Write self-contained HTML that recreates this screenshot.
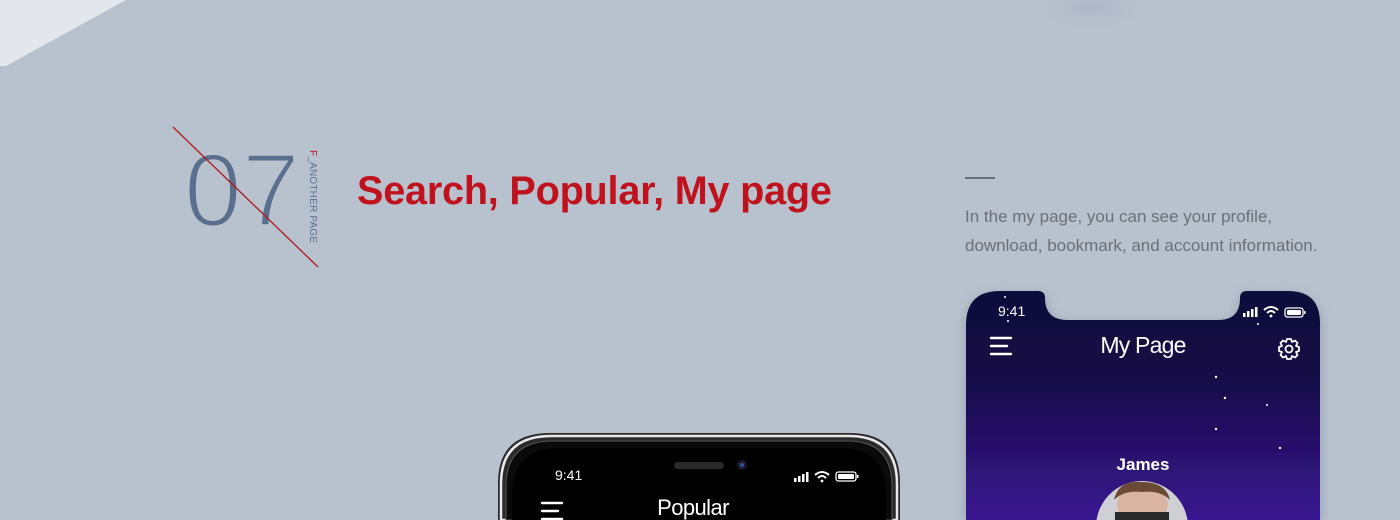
<!DOCTYPE html>
<html><head><meta charset="utf-8"><style>
*{margin:0;padding:0;box-sizing:border-box}
html,body{width:1400px;height:520px;overflow:hidden}
body{background:#b8c2ce;position:relative;font-family:"Liberation Sans",sans-serif}
.abs{position:absolute}
svg{display:block}
</style></head><body>
<svg class="abs" style="left:0;top:0" width="1400" height="520">
<defs>
<radialGradient id="blob" cx="50%" cy="50%" r="50%"><stop offset="0" stop-color="#adb6c6"/><stop offset="1" stop-color="#b8c2ce" stop-opacity="0"/></radialGradient>
<linearGradient id="scr" x1="0" y1="0" x2="0" y2="1"><stop offset="0" stop-color="#0f0a3a"/><stop offset="0.35" stop-color="#140a45"/><stop offset="1" stop-color="#3a1790"/></linearGradient>
<filter id="sh" x="-20%" y="-20%" width="140%" height="140%"><feDropShadow dx="0" dy="4" stdDeviation="6" flood-color="#6a7488" flood-opacity="0.5"/></filter>
</defs>
<polygon points="0,0 126,0 6,66 0,66" fill="#e3e6ea"/>
<ellipse cx="1090" cy="8" rx="70" ry="28" fill="url(#blob)"/>
<line x1="965" y1="178" x2="995" y2="178" stroke="#6d6f74" stroke-width="2"/>
<path filter="url(#sh)" d="M1000 291 H1038 Q1045 291 1045 298 Q1045 320 1068 320 H1218 Q1240 320 1240 298 Q1240 291 1247 291 H1288 Q1320 291 1320 323 V520 H966 V325 Q966 291 1000 291 Z" fill="url(#scr)"/>
<g fill="#fff"><circle cx="1216" cy="377" r="1.2"/><circle cx="1225" cy="398" r="1.2"/><circle cx="1267" cy="405" r="1"/><circle cx="1216" cy="429" r="1.2"/><circle cx="1280" cy="448" r="1.2"/><circle cx="1008" cy="321" r="1"/><circle cx="1258" cy="324" r="1"/><circle cx="1005" cy="297" r="1"/></g>
<g stroke="#fff" stroke-width="2.4" stroke-linecap="round"><line x1="991" y1="338" x2="1011" y2="338"/><line x1="991" y1="346" x2="1007" y2="346"/><line x1="991" y1="354" x2="1011" y2="354"/></g>
<g transform="translate(1289,349)" fill="none" stroke="#fff" stroke-width="1.8"><circle r="3.5"/><path d="M-2 -10 L2 -10 L3 -7 L6 -8.5 L8.5 -6 L7 -3 L10 -2 L10 2 L7 3 L8.5 6 L6 8.5 L3 7 L2 10 L-2 10 L-3 7 L-6 8.5 L-8.5 6 L-7 3 L-10 2 L-10 -2 L-7 -3 L-8.5 -6 L-6 -8.5 L-3 -7 Z" stroke-linejoin="round"/></g>
<g fill="#fff"><rect x="1243" y="313" width="2.5" height="4"/><rect x="1247" y="311" width="2.5" height="6"/><rect x="1251" y="309" width="2.5" height="8"/><rect x="1255" y="307" width="2.5" height="10"/></g>
<path d="M1264 310 Q1271 304 1278 310" stroke="#fff" stroke-width="2" fill="none"/><path d="M1267 313 Q1271 309 1275 313" stroke="#fff" stroke-width="2" fill="none"/><circle cx="1271" cy="316" r="1.4" fill="#fff"/>
<rect x="1285" y="308" width="18" height="9" rx="2.5" fill="none" stroke="#fff" stroke-width="1.3"/><rect x="1287" y="310" width="14" height="5" rx="1" fill="#fff"/><rect x="1304" y="311" width="1.5" height="3" fill="#fff"/>
<circle cx="1142" cy="527" r="46" fill="#cfd0d6"/>
<path d="M1117 505 Q1120 483 1142 484 Q1164 483 1168 505 L1164 520 H1120 Z" fill="#d9b4a0"/>
<path d="M1114 500 Q1118 480 1142 482 Q1166 482 1170 500 Q1160 490 1142 492 Q1124 490 1114 500Z" fill="#6b4a35"/>
<rect x="1115" y="512" width="54" height="8" fill="#2a2a2a"/>
<path d="M550 433 H850 Q900 433 900 483 V520 H498 V483 Q498 433 550 433Z" fill="#2a2a2a"/>
<path d="M551 436 H849 Q897 436 897 484 V520 H501 V484 Q501 436 551 436Z" fill="none" stroke="#e8e8e8" stroke-width="2.5"/>
<path d="M553 441 H847 Q892 441 892 486 V520 H506 V486 Q506 441 553 441Z" fill="#0a0a0a" stroke="#555" stroke-width="1"/>
<path d="M560 448 H840 Q886 448 886 494 V520 H512 V494 Q512 448 560 448Z" fill="#000"/>
<rect x="674" y="462" width="50" height="7" rx="3.5" fill="#2a2a2a"/>
<circle cx="742" cy="465" r="5" fill="#1a1a2a"/><circle cx="742" cy="465" r="2" fill="#3050a0"/>
<g stroke="#fff" stroke-width="2.4" stroke-linecap="round"><line x1="542" y1="503" x2="562" y2="503"/><line x1="542" y1="511" x2="558" y2="511"/><line x1="542" y1="519" x2="562" y2="519"/></g>
<g fill="#fff"><rect x="794" y="478" width="2.5" height="4"/><rect x="798" y="476" width="2.5" height="6"/><rect x="802" y="474" width="2.5" height="8"/><rect x="806" y="472" width="2.5" height="10"/></g>
<path d="M815 475 Q822 469 829 475" stroke="#fff" stroke-width="2" fill="none"/><path d="M818 478 Q822 474 826 478" stroke="#fff" stroke-width="2" fill="none"/><circle cx="822" cy="481" r="1.4" fill="#fff"/>
<rect x="836" y="472" width="20" height="9" rx="2.5" fill="none" stroke="#fff" stroke-width="1.3"/><rect x="838" y="474" width="16" height="5" rx="1" fill="#fff"/><rect x="857" y="475" width="1.5" height="3" fill="#fff"/>
</svg>
<div class="abs" style="left:184px;top:136px;font-size:104px;line-height:110px;color:#5a6f8e;-webkit-text-stroke:3px #b8c2ce">07</div>
<svg class="abs" style="left:0;top:0" width="400" height="300"><line x1="173" y1="127" x2="318" y2="267" stroke="#b01a22" stroke-width="1.3"/></svg>
<div class="abs" style="left:318px;top:150px;transform-origin:0 0;transform:rotate(90deg);font-size:10px;color:#5a6f8e;white-space:nowrap;letter-spacing:0.2px"><span style="color:#b01a22">F</span>_ANOTHER PAGE</div>
<div class="abs" style="left:357px;top:169px;font-size:39.6px;font-weight:bold;color:#c0121c;white-space:nowrap;letter-spacing:-0.2px">Search, Popular, My page</div>
<div class="abs" style="left:965px;top:202px;font-size:17px;line-height:29px;color:#6d6f74;letter-spacing:0px;white-space:nowrap">In the my page, you can see your profile,<br>download, bookmark, and account information.</div>
<div class="abs" style="left:998px;top:303px;font-size:14px;color:#fff">9:41</div>
<div class="abs" style="left:966px;width:354px;top:332px;text-align:center;font-size:23px;color:#fff;letter-spacing:-0.8px">My Page</div>
<div class="abs" style="left:966px;width:354px;top:455px;text-align:center;font-size:17px;font-weight:bold;color:#fff">James</div>
<div class="abs" style="left:555px;top:467px;font-size:14px;color:#fff">9:41</div>
<div class="abs" style="left:498px;width:390px;top:496px;text-align:center;font-size:22px;line-height:24px;color:#fff;letter-spacing:-0.6px">Popular</div>
</body></html>
